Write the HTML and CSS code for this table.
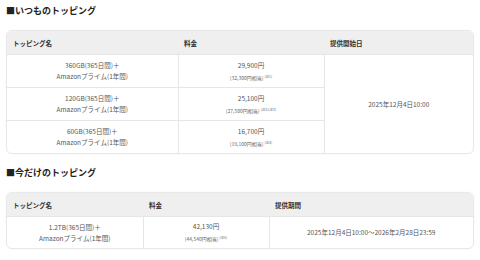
FILE: index.html
```html
<!DOCTYPE html>
<html lang="ja">
<head>
  <meta charset="utf-8">
  <title>トッピング</title>
  <link rel="stylesheet" href="styles.css">
</head>
<body>
  <h2 class="section-title">■いつものトッピング</h2>
  <div class="table-box">
    <table class="plan-table regular">
      <colgroup>
        <col class="c1"><col class="c2"><col class="c3">
      </colgroup>
      <thead>
        <tr><th>トッピング名</th><th>料金</th><th>提供開始日</th></tr>
      </thead>
      <tbody>
        <tr>
          <td>360GB(365日間)＋<br>Amazonプライム(1年間)</td>
          <td><span class="price">29,900円</span><br><span class="tax">(32,300円相当)<sup>(注1)</sup></span></td>
          <td rowspan="3" class="date">2025年12月4日10:00</td>
        </tr>
        <tr>
          <td>120GB(365日間)＋<br>Amazonプライム(1年間)</td>
          <td><span class="price">25,100円</span><br><span class="tax">(27,500円相当)<sup>(注2)(注3)</sup></span></td>
        </tr>
        <tr>
          <td>60GB(365日間)＋<br>Amazonプライム(1年間)</td>
          <td><span class="price">16,700円</span><br><span class="tax">(19,100円相当)<sup>(注4)</sup></span></td>
        </tr>
      </tbody>
    </table>
  </div>

  <h2 class="section-title">■今だけのトッピング</h2>
  <div class="table-box">
    <table class="plan-table limited">
      <colgroup>
        <col class="c1"><col class="c2"><col class="c3">
      </colgroup>
      <thead>
        <tr><th>トッピング名</th><th>料金</th><th>提供期間</th></tr>
      </thead>
      <tbody>
        <tr>
          <td>1.2TB(365日間)＋<br>Amazonプライム(1年間)</td>
          <td><span class="price">42,130円</span><br><span class="tax">(44,540円相当)<sup>(注5)</sup></span></td>
          <td class="date">2025年12月4日10:00〜2026年2月28日23:59</td>
        </tr>
      </tbody>
    </table>
  </div>
</body>
</html>
```

FILE: styles.css
```css
body {
  margin: 0;
  padding: 0 6px;
  background: #fff;
  color: #333;
  font-family: "Noto Sans CJK JP", "Noto Sans", sans-serif;
}
.section-title {
  margin: 0;
  padding-top: 5px;
  height: 25px;
  font-size: 9px;
  line-height: 12px;
  font-weight: bold;
  color: #222;
}
.table-box {
  border: 1px solid #e8e8e8;
  border-radius: 6px;
  overflow: hidden;
  box-shadow: 0 0 2px rgba(0, 0, 0, 0.06);
  margin-bottom: 8px;
}
.plan-table {
  width: 100%;
  border-collapse: collapse;
  table-layout: fixed;
}
.plan-table th {
  background: #efefef;
  height: 23px;
  padding: 0 6px;
  text-align: left;
  font-size: 6.5px;
  font-weight: bold;
  color: #333;
}
.plan-table td {
  border-top: 1px solid #e6e6e6;
  border-left: 1px solid #e6e6e6;
  text-align: center;
  font-size: 6.5px;
  line-height: 11px;
  height: 32px;
  padding: 0;
  color: #555;
}
.plan-table td:first-child {
  border-left: none;
}
.plan-table .date {
  border-left: 1px solid #e6e6e6;
}
.tax {
  font-size: 5px;
  color: #666;
}
.tax sup {
  font-size: 3.5px;
  vertical-align: 2px;
  margin-left: 1px;
}
.regular .c1 { width: 171px; }
.regular .c2 { width: 146px; }
.limited .c1 { width: 136px; }
.limited .c2 { width: 126px; }
.limited td {
  height: 31px;
}
```
